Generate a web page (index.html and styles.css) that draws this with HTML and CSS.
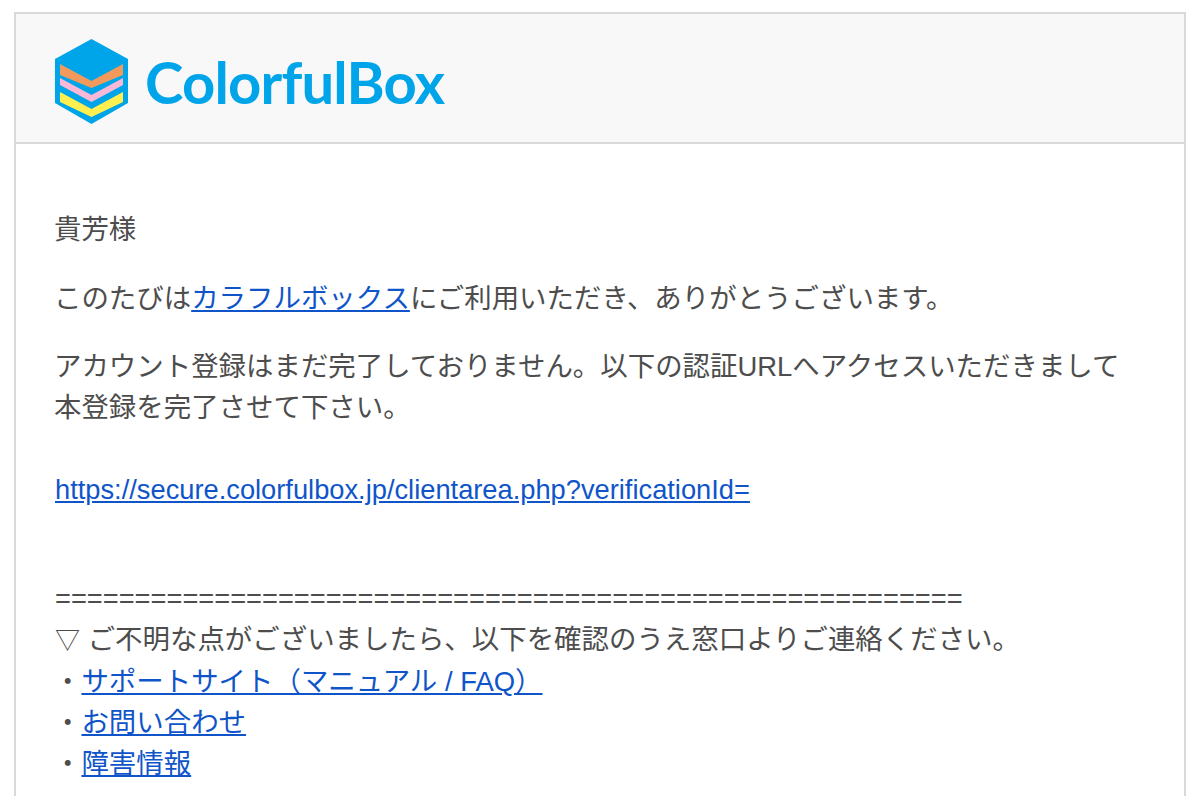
FILE: index.html
```html
<!DOCTYPE html>
<html lang="ja">
<head>
    <meta charset="UTF-8">
    <title>ColorfulBox</title>
    <link rel="stylesheet" href="styles.css">
</head>
<body>
    <div class="mail">
        <div class="mail-header">
            <svg class="logo-mark" viewBox="0 0 73 85" width="73" height="85">
                <polygon points="36.5,0 73,20 73,64 36.5,85 0,64 0,20" fill="#00a4e9"/>
                <polygon points="5,25 36.5,42 68,25 68,36 36.5,49 5,36" fill="#f29a5c"/>
                <polygon points="5,39 36.5,56 68,39 68,46 36.5,63 5,46" fill="#f9b9d6"/>
                <polygon points="5,53 36.5,70 68,53 68,63 36.5,78 5,63" fill="#fff04f"/>
            </svg>
            <span class="logo-text">ColorfulBox</span>
        </div>
        <div class="mail-body">
            <p class="greeting">貴芳様</p>
            <p>このたびは<a href="#">カラフルボックス</a>にご利用いただき、ありがとうございます。</p>
            <p>アカウント登録はまだ完了しておりません。以下の認証URLへアクセスいただきまして<br>本登録を完了させて下さい。</p>
            <p class="url"><a href="#">https://secure.colorfulbox.jp/clientarea.php?verificationId=</a></p>
            <div class="notes">
                <div class="rule">=========================================================</div>
                <div><span class="triangle">▽</span> ご不明な点がございましたら、以下を確認のうえ窓口よりご連絡ください。</div>
                <div>・<a href="#">サポートサイト（マニュアル / FAQ）</a></div>
                <div>・<a href="#">お問い合わせ</a></div>
                <div>・<a href="#">障害情報</a></div>
            </div>
        </div>
    </div>
</body>
</html>
```
FILE: styles.css
```css
html, body {
    height: 100%;
}
body {
    margin: 0;
    padding: 12px 14px 0;
    box-sizing: border-box;
    background-color: #fff;
    color: #4d4d4d;
    font-family: "Liberation Sans", "Noto Sans CJK JP", sans-serif;
    font-size: 27.45px;
    line-height: 41px;
    overflow: hidden;
}
.mail {
    box-sizing: border-box;
    height: 100%;
    border: 2px solid #d9d9d9;
    border-bottom: none;
}
.mail-header {
    box-sizing: content-box;
    display: flex;
    align-items: center;
    height: 121px;
    padding: 7px 0 0 39px;
    background-color: #f8f8f8;
    border-bottom: 2px solid #d9d9d9;
}
.logo-mark {
    margin-right: 17px;
}
.logo-text {
    color: #00a4e9;
    font-family: Lato, sans-serif;
    font-size: 58px;
    font-weight: 700;
    letter-spacing: -0.8px;
    line-height: 1;
}
.mail-body {
    padding: 65px 38px 0;
}
.mail-body p {
    margin: 0 0 27px;
}
.mail-body .greeting {
    margin-bottom: 28px;
}
.mail-body a {
    color: #0f55c9;
}
.mail-body .url {
    margin: 41px 0 68px;
    padding-left: 1px;
    font-size: 27.27px;
}
.rule {
    padding-left: 1px;
    font-size: 27.27px;
}
.triangle {
    padding-left: 1px;
    font-size: 25px;
}
```
